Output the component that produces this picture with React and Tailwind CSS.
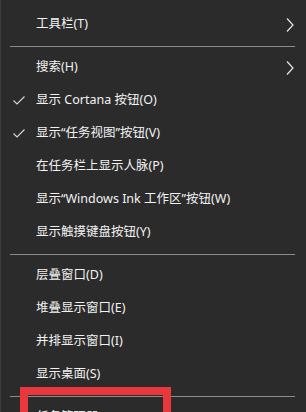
import React from 'react';

const font = { fontFamily: '"Noto Sans", "Noto Sans CJK SC", sans-serif' };

function Check() {
  return (
    <svg width="12" height="9" viewBox="0 0 12 9" className="absolute left-[12px]">
      <polyline points="0.5,4.5 4,8 11.5,0.5" fill="none" stroke="#d8d8d8" strokeWidth="1.1" />
    </svg>
  );
}

function Chevron() {
  return (
    <svg width="8" height="14" viewBox="0 0 8 14" className="absolute right-[12px]">
      <polyline points="1,0.5 7,7 1,13.5" fill="none" stroke="#e6e6e6" strokeWidth="1.2" />
    </svg>
  );
}

function Item({ label, checked, sub }) {
  return (
    <div className="relative flex h-[33px] shrink-0 items-center pl-[35px] text-[12.5px] text-[#f2f2f2]">
      {checked && <Check />}
      <span className="whitespace-nowrap">{label}</span>
      {sub && <Chevron />}
    </div>
  );
}

function Sep({ short }) {
  return (
    <div className="flex h-[10px] shrink-0 items-center pl-[9px] pr-[11px]">
      <div className={short ? 'h-px w-full bg-[#8c8c8c]' : 'h-px w-full bg-[#8c8c8c]'} />
    </div>
  );
}

export default function App() {
  return (
    <div className="relative h-[412px] w-[306px] overflow-hidden border-l border-[#3d3d3d] bg-[#2b2b2b]" style={font}>
      <div className="flex flex-col pt-[8px]">
        <Item label="工具栏(T)" sub />
        <Sep />
        <Item label="搜索(H)" sub />
        <Item label="显示 Cortana 按钮(O)" checked />
        <Item label="显示“任务视图”按钮(V)" checked />
        <Item label="在任务栏上显示人脉(P)" />
        <Item label="显示“Windows Ink 工作区”按钮(W)" />
        <Item label="显示触摸键盘按钮(Y)" />
        <Sep />
        <Item label="层叠窗口(D)" />
        <Item label="堆叠显示窗口(E)" />
        <Item label="并排显示窗口(I)" />
        <Item label="显示桌面(S)" />
        <Sep />
        <Item label="任务管理器(K)" />
      </div>
      <div className="absolute left-[19px] top-[387px] h-[40px] w-[151px] border-[8px] border-[#e8383b]" />
    </div>
  );
}
